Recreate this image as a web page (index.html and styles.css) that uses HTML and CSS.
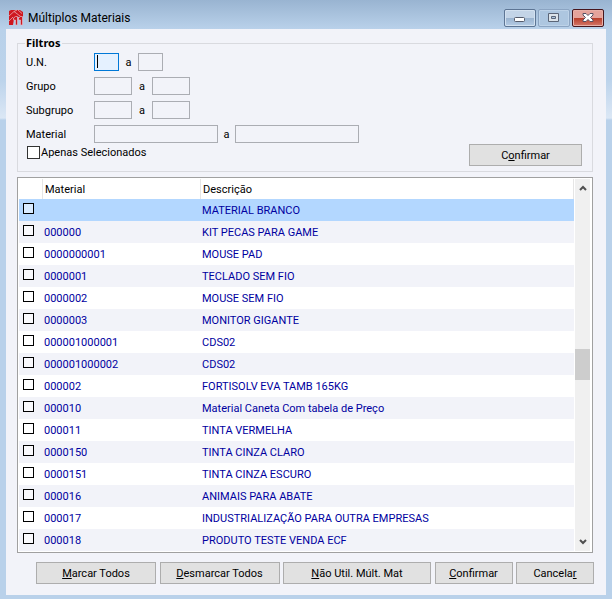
FILE: index.html
```
<!DOCTYPE html>
<html lang="pt-BR">
<head>
    <meta charset="UTF-8">
    <title>Múltiplos Materiais</title>
    <meta name="viewport" content="width=device-width, initial-scale=1.0">
    <link rel="stylesheet" href="styles.css">
</head>
<body>
    <div class="window">
        <header class="titlebar">
            <svg class="logo" viewBox="0 0 15 17" width="15" height="17" aria-hidden="true">
                <path fill="#cf1820" d="M0 2l2-1h9l3 2v5H5v2l-1 6H0z"/>
                <path fill="none" stroke="#e9a9b0" stroke-width=".8" d="M0 7l5-4.500L8 1M5 2.500l4 3 4 3M9 1l4 3.500M0 12l4-4"/>
                <path fill="#cf1820" stroke="#e3bcc9" stroke-width=".7" d="M4.500 9l2-1.500h2V16h-2v-5h-2zM9.500 9l2-1.500h2V16h-2v-5h-2z"/>
            </svg>
            <h1>Múltiplos Materiais</h1>
            <div class="window-buttons">
                <button type="button" class="win-btn" aria-label="Minimizar">
                    <svg viewBox="0 0 12 10" width="12" height="10"><rect x=".5" y="4.500" width="10" height="4" rx="1" fill="#fff" stroke="#555b6b"/></svg>
                </button>
                <button type="button" class="win-btn win-max" aria-label="Maximizar">
                    <svg viewBox="0 0 12 10" width="12" height="10"><path fill="#dce3ea" fill-rule="evenodd" stroke="#5b6577" d="M.5.5h10v8H.5zM3.500 3.500h4v2h-4z"/></svg>
                </button>
                <button type="button" class="win-btn win-close" aria-label="Fechar">
                    <svg viewBox="0 0 12 10" width="12" height="10"><path fill="#fff" stroke="#565063" d="M1 .5h3l2 2 2-2h3v1.500L8.500 4.500 11 7v1.500H8l-2-2-2 2H1V7l2.500-2.500L1 2z"/></svg>
                </button>
            </div>
        </header>

        <main class="client">
            <form class="content">
                <fieldset class="filters">
                    <legend>Filtros</legend>
                    <div class="fields">
                        <div class="field">
                            <label for="un-de">U.N.</label>
                            <input class="w-small focused" type="text" id="un-de">
                            <label class="to" for="un-ate">a</label>
                            <input class="w-small" type="text" id="un-ate">
                        </div>
                        <div class="field">
                            <label for="grupo-de">Grupo</label>
                            <input class="w-medium" type="text" id="grupo-de">
                            <label class="to" for="grupo-ate">a</label>
                            <input class="w-medium" type="text" id="grupo-ate">
                        </div>
                        <div class="field">
                            <label for="subgrupo-de">Subgrupo</label>
                            <input class="w-medium" type="text" id="subgrupo-de">
                            <label class="to" for="subgrupo-ate">a</label>
                            <input class="w-medium" type="text" id="subgrupo-ate">
                        </div>
                        <div class="field">
                            <label for="material-de">Material</label>
                            <input class="w-large" type="text" id="material-de">
                            <label class="to" for="material-ate">a</label>
                            <input class="w-large" type="text" id="material-ate">
                        </div>
                    </div>
                    <div class="filter-footer">
                        <label class="check-label"><input type="checkbox" class="check"><span>Apenas Selecionados</span></label>
                        <button type="button" class="btn btn-filter">C<u>o</u>nfirmar</button>
                    </div>
                </fieldset>

                <div class="list">
                    <table class="grid">
                        <colgroup>
                            <col class="col-check">
                            <col class="col-material">
                            <col>
                        </colgroup>
                        <thead>
                            <tr><th></th><th>Material</th><th>Descrição</th></tr>
                        </thead>
                        <tbody id="rows"></tbody>
                    </table>
                    <div class="scrollbar">
                        <svg viewBox="0 0 8 6" width="8" height="6"><path d="M1 5l3-3 3 3" fill="none" stroke="#505050" stroke-width="2"/></svg>
                        <div class="track"><div class="thumb"></div></div>
                        <svg viewBox="0 0 8 6" width="8" height="6"><path d="M1 1l3 3 3-3" fill="none" stroke="#505050" stroke-width="2"/></svg>
                    </div>
                </div>

                <div class="actions">
                    <button type="button" class="btn btn-mark"><u>M</u>arcar Todos</button>
                    <button type="button" class="btn btn-mark"><u>D</u>esmarcar Todos</button>
                    <button type="button" class="btn btn-skip"><u>N</u>ão Util. Múlt. Mat</button>
                    <button type="button" class="btn btn-end"><u>C</u>onfirmar</button>
                    <button type="button" class="btn btn-end">Cancela<u>r</u></button>
                </div>
            </form>
        </main>
    </div>

    <script src="script.js"></script>
</body>
</html>
```
FILE: styles.css
```
* {
    box-sizing: border-box;
}

body {
    margin: 0;
    font-family: Roboto, 'Liberation Sans', sans-serif;
    font-size: 11px;
    line-height: 14px;
    color: #000;
}

button, input {
    font: inherit;
    color: inherit;
    margin: 0;
}

/* Janela */
.window {
    min-height: 100vh;
    display: flex;
    flex-direction: column;
    padding: 0 6px 4px;
    background: linear-gradient(#99b4d1, #b9d1ea 29px, #bcd3eb 80px, #dbe7f5 118px, #b9d1ea 120px);
}

.titlebar {
    height: 29px;
    display: flex;
    align-items: center;
    padding: 6px 2px 0 3px;
}

.titlebar h1 {
    flex: 1;
    margin: 0 0 0 4px;
    font-size: 12px;
    font-weight: normal;
}

.window-buttons {
    display: flex;
    gap: 2px;
}

.win-btn {
    width: 32px;
    height: 18px;
    display: flex;
    align-items: center;
    justify-content: center;
    padding: 0;
    border: 1px solid #5d7594;
    border-radius: 2px;
    background: linear-gradient(#c3d4e7 50%, #9ab3cf 50%, #b5cce5);
    box-shadow: inset 0 0 0 1px #d3e1f0;
}

.win-max {
    border-color: #8ba4c2;
    background: #adc6e0;
    box-shadow: inset 0 0 0 1px #bdd2e8;
}

.win-close {
    border-color: #47161d;
    background: linear-gradient(#e5a39b 50%, #b83c28 50%, #d4786a);
    box-shadow: inset 0 0 0 1px #e8b0a8;
}

.client {
    flex: 1;
    background: #f2f3f9;
}

.content {
    display: flex;
    flex-direction: column;
    padding: 7px 12px 11px 11px;
}

/* Filtros */
.filters {
    margin: 0 1px 0 0;
    padding: 3px 10px 5px 7px;
    border: 1px solid #d9dadf;
}

.filters legend {
    padding: 0 2px 0 1px;
    font-family: 'Noto Sans', sans-serif;
    font-weight: bold;
}

.fields {
    display: grid;
    gap: 6px;
}

.field {
    display: flex;
    align-items: center;
}

.field label {
    padding-top: 2px;
}

.field label:first-child {
    width: 69px;
    padding-left: 1px;
}

.field .to {
    width: 19px;
    text-align: center;
}

.field .w-medium + .to {
    width: 20px;
}

.field .w-large + .to {
    width: 17px;
}

.field input {
    height: 18px;
    padding: 0 2px;
    border: 1px solid #abadb3;
    border-radius: 0;
    background: #f2f3f9;
    outline: none;
}

.field .w-small {
    width: 25px;
}

.field .w-medium {
    width: 38px;
}

.field .w-large {
    width: 124px;
}

.field .focused {
    border-color: #0078d7;
    background: linear-gradient(#000, #000) 2px 1px / 1px 13px no-repeat #e5f1ff;
}

.filter-footer {
    display: flex;
    align-items: flex-start;
    justify-content: space-between;
    margin-top: 1px;
}

.check-label {
    display: flex;
    gap: 1px;
    padding: 2px 0 0 2px;
}

.check {
    appearance: none;
    width: 13px;
    height: 13px;
    border: 1px solid #333;
    background: #fff;
}

/* Botões */
.btn {
    height: 22px;
    padding: 2px 0 0;
    border: 1px solid #adadad;
    background: #e1e1e1;
}

.btn-filter {
    width: 113px;
}

/* Lista */
.list {
    display: flex;
    margin: 5px 1px 0 0;
    padding: 1px;
    border: 1px solid #a0a0a0;
    background: #fff;
}

.grid {
    flex: 1;
    table-layout: fixed;
    border-spacing: 0;
    color: #0000a0;
}

.col-check {
    width: 24px;
}

.col-material {
    width: 158px;
}

.grid th {
    height: 20px;
    padding: 2px 2px 0;
    border-right: 1px solid #e5e5e5;
    color: #000;
    font-weight: normal;
    text-align: left;
}

.grid td {
    height: 22px;
    padding: 2px 1px 0;
    white-space: nowrap;
}

.grid td:first-child {
    padding: 4px 4px 0;
    vertical-align: top;
}

.grid tbody tr:nth-child(even) {
    background: #f2f3f9;
}

.grid tbody .selected {
    background: #b3d7ff;
}

.grid .check {
    display: block;
    width: 11px;
    height: 11px;
    border-color: #000;
    background: rgba(255, 255, 255, .5);
}

.scrollbar {
    width: 17px;
    display: flex;
    flex-direction: column;
    align-items: center;
    padding: 6px 0;
    border-right: 1px solid #fff;
    border-left: 1px solid #fff;
    background: #f0f0f0;
}

.track {
    flex: 1;
    align-self: stretch;
}

.thumb {
    height: 31px;
    margin-top: 158px;
    background: #cdcdcd;
}

/* Rodapé */
.actions {
    display: flex;
    justify-content: space-between;
    margin-top: 9px;
    padding-left: 19px;
}

.btn-mark {
    width: 120px;
}

.btn-skip {
    width: 148px;
}

.btn-end {
    width: 78px;
}
```
FILE: script.js
```
const materiais = [
    ['', 'MATERIAL BRANCO'],
    ['000000', 'KIT PECAS PARA GAME'],
    ['0000000001', 'MOUSE PAD'],
    ['0000001', 'TECLADO SEM FIO'],
    ['0000002', 'MOUSE SEM FIO'],
    ['0000003', 'MONITOR GIGANTE'],
    ['000001000001', 'CDS02'],
    ['000001000002', 'CDS02'],
    ['000002', 'FORTISOLV EVA TAMB 165KG'],
    ['000010', 'Material Caneta Com tabela de Preço'],
    ['000011', 'TINTA VERMELHA'],
    ['0000150', 'TINTA CINZA CLARO'],
    ['0000151', 'TINTA CINZA ESCURO'],
    ['000016', 'ANIMAIS PARA ABATE'],
    ['000017', 'INDUSTRIALIZAÇÃO PARA OUTRA EMPRESAS'],
    ['000018', 'PRODUTO TESTE VENDA ECF']
];

const rows = document.getElementById('rows');

materiais.forEach(([codigo, descricao], i) => {
    const tr = rows.insertRow();
    if (i === 0) tr.className = 'selected';

    const check = document.createElement('input');
    check.type = 'checkbox';
    check.className = 'check';
    check.setAttribute('aria-label', descricao);

    tr.insertCell().append(check);
    tr.insertCell().textContent = codigo;
    tr.insertCell().textContent = descricao;
});
```
